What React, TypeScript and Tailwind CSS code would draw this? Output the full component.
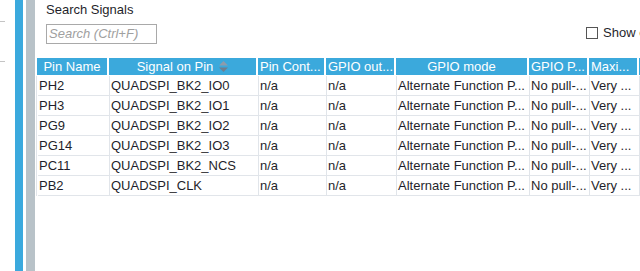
import React from "react";

const cols = [
  { w: 72, h: "Pin Name", align: "center" },
  { w: 149, h: "Signal on Pin", align: "center", sort: true },
  { w: 68, h: "Pin Cont...", align: "left" },
  { w: 70, h: "GPIO out...", align: "left" },
  { w: 133, h: "GPIO mode", align: "center" },
  { w: 60, h: "GPIO P...", align: "left" },
  { w: 50, h: "Maxi...", align: "left" },
  { w: 80, h: "", align: "left" },
];

const rows = [
  ["PH2", "QUADSPI_BK2_IO0"],
  ["PH3", "QUADSPI_BK2_IO1"],
  ["PG9", "QUADSPI_BK2_IO2"],
  ["PG14", "QUADSPI_BK2_IO3"],
  ["PC11", "QUADSPI_BK2_NCS"],
  ["PB2", "QUADSPI_CLK"],
];

function SortIcon() {
  return (
    <svg width="9" height="11" viewBox="0 0 9 11" className="ml-[6px]">
      <polygon points="0,4.5 4.5,0 9,4.5" fill="#8e9bab" />
      <polygon points="0,6.5 4.5,11 9,6.5" fill="#6f7f90" />
    </svg>
  );
}

export default function App() {
  return (
    <div
      className="flex w-[640px] h-[271px] overflow-hidden bg-white text-[13px] text-[#1f1f2b]"
      style={{ fontFamily: '"Liberation Sans", Arial, sans-serif' }}
    >
      <div className="w-[15px] shrink-0 flex flex-col">
        <div className="mt-[21px] h-px w-[5px] bg-[#c4c4c4]" />
        <div className="mt-[39px] h-px w-[5px] bg-[#c4c4c4]" />
      </div>
      <div className="w-[8px] shrink-0 bg-[#3ba9dd]" />
      <div className="w-[3px] shrink-0 bg-white" />
      <div className="w-[9px] shrink-0 bg-[#b8c2c8]" />
      <div className="flex-1 flex flex-col min-w-0 overflow-hidden">
        <div className="flex">
          <div className="pl-[11px] flex flex-col shrink-0">
            <div className="pt-[2px] leading-[16px]">Search Signals</div>
            <div className="mt-[6px] w-[111px] h-[20px] border border-[#a9a9a9] flex items-center pl-[2px] italic text-[#a0a0a0] leading-[16px]">
              Search (Ctrl+F)
            </div>
          </div>
          <div className="ml-[429px] pt-[27px] flex items-start whitespace-nowrap shrink-0">
            <div className="w-[12px] h-[12px] border border-[#555] bg-white mr-[5px] shrink-0" />
            <span className="leading-[12px]">Show only Modified</span>
          </div>
        </div>
        <div className="mt-[14px] flex flex-col whitespace-nowrap">
          <div className="flex pl-[2px] h-[18px] pb-px">
            {cols.map((c, i) => (
              <div
                key={i}
                style={{ width: c.w }}
                className="shrink-0 border-r-2 border-white"
              >
                <div
                  className={
                    "h-full bg-[#3ba9dc] text-white flex items-center leading-[16px] overflow-hidden " +
                    (c.align === "center" ? "justify-center" : "pl-[2px]")
                  }
                >
                  <span>{c.h}</span>
                  {c.sort && <SortIcon />}
                </div>
              </div>
            ))}
          </div>
          {rows.map((r, ri) => {
            const cells = [r[0], r[1], "n/a", "n/a", "Alternate Function P...", "No pull-...", "Very ...", ""];
            return (
              <div key={ri} className="flex border-l border-[#e1e5ea] ml-px pl-px h-[20px]">
                {cols.map((c, i) => (
                  <div
                    key={i}
                    style={{ width: c.w }}
                    className="shrink-0 border-r border-b border-[#e1e5ea] flex items-center pl-[1px] leading-[16px] overflow-hidden"
                  >
                    {cells[i]}
                  </div>
                ))}
              </div>
            );
          })}
        </div>
      </div>
    </div>
  );
}
